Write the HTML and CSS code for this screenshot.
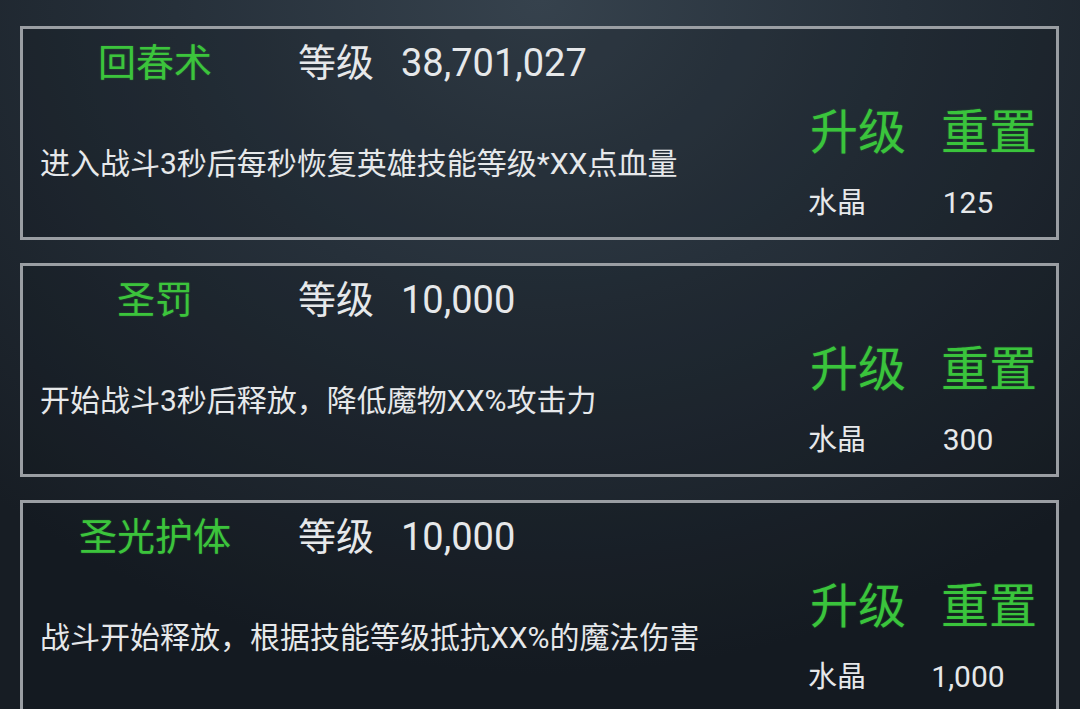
FILE: index.html
```html
<!DOCTYPE html>
<html lang="zh-CN">
<head>
<meta charset="utf-8">
<title>技能</title>
<link rel="stylesheet" href="styles.css">
</head>
<body>
<div class="list">
  <section class="card">
    <div class="info">
      <div class="head">
        <span class="name">回春术</span>
        <span class="level">等级</span>
        <span class="level-num">38,701,027</span>
      </div>
      <p class="desc">进入战斗3秒后每秒恢复英雄技能等级*XX点血量</p>
    </div>
    <div class="side">
      <div class="actions">
        <span class="btn">升级</span>
        <span class="btn">重置</span>
      </div>
      <div class="cost">
        <span class="cost-label">水晶</span>
        <span class="cost-num">125</span>
      </div>
    </div>
  </section>
  <section class="card">
    <div class="info">
      <div class="head">
        <span class="name">圣罚</span>
        <span class="level">等级</span>
        <span class="level-num">10,000</span>
      </div>
      <p class="desc">开始战斗3秒后释放，降低魔物XX%攻击力</p>
    </div>
    <div class="side">
      <div class="actions">
        <span class="btn">升级</span>
        <span class="btn">重置</span>
      </div>
      <div class="cost">
        <span class="cost-label">水晶</span>
        <span class="cost-num">300</span>
      </div>
    </div>
  </section>
  <section class="card">
    <div class="info">
      <div class="head">
        <span class="name">圣光护体</span>
        <span class="level">等级</span>
        <span class="level-num">10,000</span>
      </div>
      <p class="desc">战斗开始释放，根据技能等级抵抗XX%的魔法伤害</p>
    </div>
    <div class="side">
      <div class="actions">
        <span class="btn">升级</span>
        <span class="btn">重置</span>
      </div>
      <div class="cost">
        <span class="cost-label">水晶</span>
        <span class="cost-num">1,000</span>
      </div>
    </div>
  </section>
</div>
</body>
</html>
```

FILE: styles.css
```css
* { box-sizing: border-box; }

html, body {
  margin: 0;
  height: 100%;
  overflow: hidden;
}

body {
  background: radial-gradient(ellipse 75% 95% at 50% 0%, #36424d 0%, #26303a 45%, #171d24 100%);
  font-family: Roboto, "Noto Sans CJK SC", sans-serif;
  color: #e6e8ea;
}

.list {
  display: flex;
  flex-direction: column;
  gap: 23px;
  padding: 26px 21px 0 20px;
}

.card {
  flex: none;
  height: 214px;
  border: 3px solid #9a9ea3;
  background: rgba(12, 17, 23, 0.18);
  display: flex;
  padding: 12px 19px 0 17px;
}

.info {
  flex: 1;
  min-width: 0;
}

.head {
  display: flex;
  align-items: center;
  height: 44px;
  font-size: 38px;
  line-height: 44px;
}

.name {
  width: 230px;
  text-align: center;
  color: #3cc43c;
  text-shadow: 0 0 2px rgba(60, 200, 60, 0.35);
}

.level {
  margin-left: 28px;
}

.level-num {
  margin-left: 27px;
}

.desc {
  margin: 59px 0 0 0;
  font-size: 30px;
  line-height: 40px;
  white-space: nowrap;
}

.side {
  width: 229px;
  flex: none;
  padding-top: 64px;
}

.actions {
  display: flex;
  gap: 35px;
  margin-left: 2px;
  font-size: 48px;
  line-height: 56px;
  color: #3ac43c;
  text-shadow: 0 0 2px rgba(60, 200, 60, 0.35);
}

.btn {
  width: 96px;
}

.cost {
  display: flex;
  margin-top: 22px;
  font-size: 30px;
  line-height: 40px;
}

.cost-label {
  width: 100px;
  font-size: 29px;
}

.cost-num {
  width: 120px;
  text-align: center;
}
```
